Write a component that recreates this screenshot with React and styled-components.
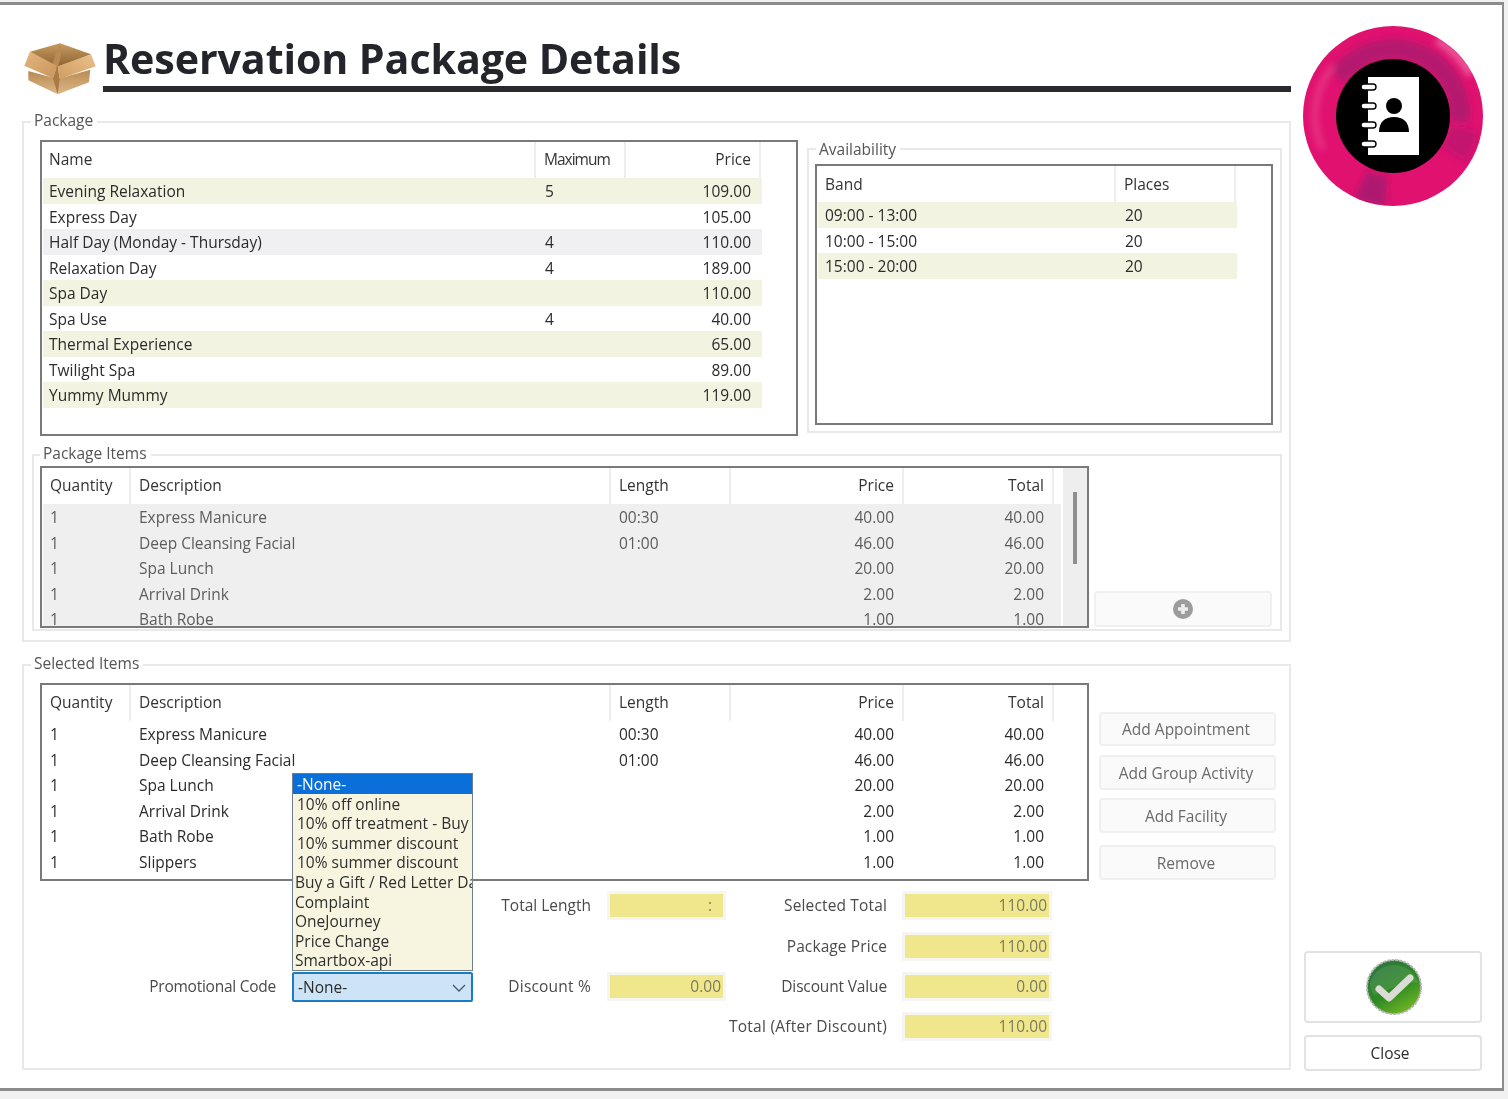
import React from "react";
import styled, { createGlobalStyle } from "styled-components";

const GlobalStyle = createGlobalStyle`
    html, body {
        margin: 0;
        padding: 0;
        background: #f1f1f1;
    }
    body {
        font-family: "Open Sans", "Noto Sans", "Liberation Sans", sans-serif;
        font-size: 15.5px;
        color: #2b2b2b;
    }
`;

const Page = styled.div`
    position: relative;
    width: 1508px;
    height: 1099px;
    overflow: hidden;
    background: #f1f1f1;
    filter: blur(0.35px);
`;

const Window = styled.div`
    position: absolute;
    left: -2px;
    top: 2px;
    width: 1506px;
    height: 1089px;
    box-sizing: border-box;
    background: #fff;
    border: 2px solid #8c8c8c;
    border-top-width: 3px;
    border-bottom-width: 3px;
`;

const Title = styled.h1`
    position: absolute;
    left: 103px;
    top: 30px;
    margin: 0;
    font-size: 41.2px;
    line-height: 56px;
    font-weight: 700;
    letter-spacing: -0.1px;
    color: #23252b;
    white-space: nowrap;
`;

const TitleRule = styled.div`
    position: absolute;
    left: 103px;
    top: 86px;
    width: 1188px;
    height: 6px;
    background: #2a2a2e;
`;

const BoxIcon = styled.svg`
    position: absolute;
    left: 15px;
    top: 35px;
`;

const Logo = styled.svg`
    position: absolute;
    left: 1302px;
    top: 25px;
`;

const Group = styled.div`
    position: absolute;
    left: ${(p) => p.$x}px;
    top: ${(p) => p.$y}px;
    width: ${(p) => p.$w}px;
    height: ${(p) => p.$h}px;
    box-sizing: border-box;
    border: 2px solid #e9e9e9;
`;

const GroupTitle = styled.span`
    position: absolute;
    left: ${(p) => p.$x}px;
    top: ${(p) => p.$y}px;
    padding: 0 4px 0 3px;
    background: #fff;
    color: #555;
    line-height: 22px;
    white-space: nowrap;
`;

const Frame = styled.div`
    position: absolute;
    left: ${(p) => p.$x}px;
    top: ${(p) => p.$y}px;
    width: ${(p) => p.$w}px;
    height: ${(p) => p.$h}px;
    box-sizing: border-box;
    border: 2px solid #7a7a7a;
    background: #fff;
    overflow: hidden;
`;

const Head = styled.div`
    display: grid;
    grid-template-columns: ${(p) => p.$cols};
    height: ${(p) => p.$h}px;
`;

const HeadCell = styled.div`
    padding: 0 ${(p) => (p.$right ? "8px" : "0")} 0 ${(p) => p.$pad ?? 8}px;
    border-right: 2px solid #eeeeee;
    line-height: ${(p) => p.$lh}px;
    letter-spacing: ${(p) => p.$ls ?? 0}px;
    text-align: ${(p) => (p.$right ? "right" : "left")};
    color: #333;
    white-space: nowrap;
`;

const Row = styled.div`
    display: grid;
    grid-template-columns: ${(p) => p.$cols};
    height: 25.55px;
    line-height: 27.55px;
    margin-left: 1px;
    width: ${(p) => p.$w}px;
    background: ${(p) => p.$bg || "transparent"};
    color: ${(p) => (p.$muted ? "#5c5c5c" : "#2b2b2b")};
`;

const Cell = styled.div`
    padding: 0 ${(p) => (p.$right ? "11px" : "0")} 0 ${(p) => p.$pad ?? 7}px;
    text-align: ${(p) => (p.$right ? "right" : "left")};
    white-space: nowrap;
    overflow: hidden;
`;

const ScrollTrack = styled.div`
    position: absolute;
    right: 0;
    top: 0;
    bottom: 0;
    width: 24px;
    background: #efeeef;
`;

const ScrollThumb = styled.div`
    position: absolute;
    left: 10px;
    top: 24px;
    width: 4px;
    height: 72px;
    background: #8f8f8f;
`;

const Button = styled.button`
    position: absolute;
    left: ${(p) => p.$x}px;
    top: ${(p) => p.$y}px;
    width: ${(p) => p.$w}px;
    height: ${(p) => p.$h}px;
    box-sizing: border-box;
    padding: 0 ${(p) => p.$pr ?? 0}px 0 ${(p) => p.$pl ?? 0}px;
    display: flex;
    align-items: center;
    justify-content: center;
    border: 2px solid ${(p) => (p.$dark ? "#e2e2e2" : "#f0f0f0")};
    border-radius: 4px;
    background: ${(p) => (p.$dark ? "#fff" : "#fbfafb")};
    font: inherit;
    color: ${(p) => (p.$dark ? "#2b2b2b" : "#6a6a6a")};
`;

const FieldLabel = styled.label`
    position: absolute;
    right: ${(p) => 1508 - p.$right}px;
    top: ${(p) => p.$y}px;
    line-height: 26px;
    letter-spacing: ${(p) => p.$ls ?? 0}px;
    color: #4a4a4a;
    white-space: nowrap;
`;

const Field = styled.div`
    position: absolute;
    left: ${(p) => p.$x}px;
    top: ${(p) => p.$y}px;
    width: ${(p) => p.$w}px;
    height: 29px;
    box-sizing: border-box;
    border: 3px solid #f5f5f2;
    background: #f0e68c;
    color: #7b7b60;
    line-height: 23px;
    text-align: right;
    padding-right: ${(p) => p.$pr ?? 2}px;
`;

const Options = styled.ul`
    position: absolute;
    left: 292px;
    top: 773px;
    width: 181px;
    height: 198px;
    box-sizing: border-box;
    margin: 0;
    padding: 0;
    list-style: none;
    border: 1px solid #6e7f8f;
    border-top-color: #4a7fb5;
    background: #f7f5df;
    overflow: hidden;
`;

const Option = styled.li`
    height: 19.6px;
    line-height: 21.6px;
    padding-left: ${(p) => (p.$indent ? 4 : 2)}px;
    background: ${(p) => (p.$active ? "#0a6fd8" : "transparent")};
    color: ${(p) => (p.$active ? "#fff" : "#2f2f2f")};
    white-space: nowrap;
`;

const Select = styled.div`
    position: absolute;
    left: 292px;
    top: 972px;
    width: 181px;
    height: 30px;
    box-sizing: border-box;
    padding-left: 4px;
    border: 2px solid #1f7ac4;
    border-radius: 2px;
    background: #cde4f7;
    line-height: 26px;
    color: #2b2b2b;
`;

const Chevron = styled.svg`
    position: absolute;
    right: 4px;
    top: 9px;
`;

const packageCols = "494px 90px 135px";
const packageRows = [
    ["Evening Relaxation", "5", "109.00", "#f3f3e1"],
    ["Express Day", "", "105.00"],
    ["Half Day (Monday - Thursday)", "4", "110.00", "#f0f0f2"],
    ["Relaxation Day", "4", "189.00"],
    ["Spa Day", "", "110.00", "#f3f3e1"],
    ["Spa Use", "4", "40.00"],
    ["Thermal Experience", "", "65.00", "#f3f3e1"],
    ["Twilight Spa", "", "89.00"],
    ["Yummy Mummy", "", "119.00", "#f3f3e1"],
];

const bandCols = "299px 120px";
const bandRows = [
    ["09:00 - 13:00", "20", "#f3f3e1"],
    ["10:00 - 15:00", "20"],
    ["15:00 - 20:00", "20", "#f3f3e1"],
];

const itemCols = "89px 480px 120px 173px 150px";
const itemHead = [
    { t: "Quantity" },
    { t: "Description" },
    { t: "Length" },
    { t: "Price", right: true },
    { t: "Total", right: true },
];
const itemRows = [
    ["1", "Express Manicure", "00:30", "40.00", "40.00"],
    ["1", "Deep Cleansing Facial", "01:00", "46.00", "46.00"],
    ["1", "Spa Lunch", "", "20.00", "20.00"],
    ["1", "Arrival Drink", "", "2.00", "2.00"],
    ["1", "Bath Robe", "", "1.00", "1.00"],
    ["1", "Slippers", "", "1.00", "1.00"],
];

const promoCodes = [
    { t: "-None-", active: true, indent: true },
    { t: "10% off online", indent: true },
    { t: "10% off treatment - Buy One Get One", indent: true },
    { t: "10% summer discount", indent: true },
    { t: "10% summer discount", indent: true },
    { t: "Buy a Gift / Red Letter Day" },
    { t: "Complaint" },
    { t: "OneJourney" },
    { t: "Price Change" },
    { t: "Smartbox-api" },
];

const labels = [
    { t: "Total Length", right: 591, y: 892 },
    { t: "Selected Total", right: 887, y: 892, ls: 0.15 },
    { t: "Package Price", right: 887, y: 933, ls: 0.1 },
    { t: "Promotional Code", right: 276, y: 973, ls: -0.25 },
    { t: "Discount %", right: 591, y: 973, ls: 0.2 },
    { t: "Discount Value", right: 887, y: 973, ls: -0.15 },
    { t: "Total (After Discount)", right: 887, y: 1013, ls: 0.25 },
];

const fields = [
    { v: ":", x: 607, y: 891, w: 119, pr: 11 },
    { v: "0.00", x: 607, y: 972, w: 119 },
    { v: "110.00", x: 902, y: 891, w: 150 },
    { v: "110.00", x: 902, y: 932, w: 150 },
    { v: "0.00", x: 902, y: 972, w: 150 },
    { v: "110.00", x: 902, y: 1012, w: 150 },
];

const sideButtons = [
    { t: "Add Appointment", y: 712, h: 34 },
    { t: "Add Group Activity", y: 755, h: 35 },
    { t: "Add Facility", y: 798, h: 35 },
    { t: "Remove", y: 845, h: 35 },
];

// ring segment of the logo, angles clockwise from 12 o'clock
const arc = (r, from, to) => {
    const pt = (a) => {
        const rad = ((a - 90) * Math.PI) / 180;
        return `${(91 + r * Math.cos(rad)).toFixed(2)} ${(91 + r * Math.sin(rad)).toFixed(2)}`;
    };
    return `M${pt(from)} A${r} ${r} 0 ${to - from > 180 ? 1 : 0} 1 ${pt(to)}`;
};

const ItemTable = ({ rows, muted, bg }) => (
    <>
        <Head $cols={itemCols} $h={36}>
            {itemHead.map((h) => (
                <HeadCell key={h.t} $right={h.right} $lh={34}>{h.t}</HeadCell>
            ))}
        </Head>
        {rows.map((r, i) => (
            <Row key={i} $cols={itemCols} $w={1018} $bg={bg} $muted={muted}>
                <Cell $pad={7}>{r[0]}</Cell>
                <Cell $pad={7}>{r[1]}</Cell>
                <Cell $pad={7}>{r[2]}</Cell>
                <Cell $right>{r[3]}</Cell>
                <Cell $right>{r[4]}</Cell>
            </Row>
        ))}
    </>
);

const App = () => (
    <Page>
        <GlobalStyle />
        <Window />

        <BoxIcon width="90" height="65" viewBox="0 0 270 195">
            <defs>
                <linearGradient id="boxInner" x1="0" y1="0" x2="0" y2="1">
                    <stop offset="0" stopColor="#c79a60" />
                    <stop offset="1" stopColor="#8a5f30" />
                </linearGradient>
                <linearGradient id="boxLeft" x1="0" y1="0" x2="1" y2="1">
                    <stop offset="0" stopColor="#e2b67f" />
                    <stop offset="1" stopColor="#c9955a" />
                </linearGradient>
                <linearGradient id="boxRight" x1="1" y1="0" x2="0" y2="1">
                    <stop offset="0" stopColor="#e8c08c" />
                    <stop offset="1" stopColor="#d09d60" />
                </linearGradient>
                <linearGradient id="boxBody" x1="0" y1="0" x2="0" y2="1">
                    <stop offset="0" stopColor="#b98a52" />
                    <stop offset="1" stopColor="#ddb888" />
                </linearGradient>
                <filter id="boxSoft"><feGaussianBlur stdDeviation="1.4" /></filter>
            </defs>
            <g filter="url(#boxSoft)">
                <path d="M45 50 L135 25 L228 58 L128 100 Z" fill="url(#boxInner)" />
                <path d="M135 25 L138 62 L128 100 L112 88 L122 58 Z" fill="#b98a52" />
                <path d="M40 108 L128 132 L128 178 L40 136 Z" fill="url(#boxBody)" />
                <path d="M128 132 L226 104 L222 142 L128 178 Z" fill="url(#boxBody)" />
                <path d="M45 50 L28 92 L114 130 L126 92 Z" fill="url(#boxLeft)" />
                <path d="M228 58 L242 94 L134 132 L128 94 Z" fill="url(#boxRight)" />
                <path d="M126 92 L114 130 L128 178 L134 132 L128 94 Z" fill="#a87a44" />
            </g>
        </BoxIcon>
        <Title>Reservation Package Details</Title>
        <TitleRule />

        <Logo width="182" height="182" viewBox="0 0 182 182">
            <defs>
                <clipPath id="ringClip"><circle cx="91" cy="91" r="90" /></clipPath>
                <filter id="ringSoft"><feGaussianBlur stdDeviation="3" /></filter>
            </defs>
            <circle cx="91" cy="91" r="90" fill="#e0116f" />
            <g clipPath="url(#ringClip)" filter="url(#ringSoft)" fill="none">
                <path d={arc(67, -55, 95)} stroke="#98206e" strokeWidth="20" opacity="0.6" />
                <path d={arc(88, 30, 62)} stroke="#f06aa6" strokeWidth="8" opacity="0.8" />
                <path d={arc(78, 245, 310)} stroke="#ef4c94" strokeWidth="7" opacity="0.55" />
                <path d={arc(76, 185, 205)} stroke="#8e1f72" strokeWidth="30" opacity="0.6" />
                <path d={arc(72, 100, 122)} stroke="#a01c6e" strokeWidth="28" opacity="0.45" />
            </g>
            <circle cx="91" cy="91" r="57" fill="#000" />
            <rect x="66" y="52" width="51" height="78" fill="#fff" />
            <g fill="#fff" stroke="#000" strokeWidth="1.4">
                <rect x="59" y="59" width="15" height="6" rx="3" />
                <rect x="59" y="78" width="15" height="6" rx="3" />
                <rect x="59" y="97" width="15" height="6" rx="3" />
                <rect x="59" y="116" width="15" height="6" rx="3" />
            </g>
            <circle cx="92" cy="81" r="8" fill="#000" />
            <path d="M77 107 C77 97 83 92 92 92 C101 92 107 97 107 107 Z" fill="#000" />
        </Logo>

        <Group $x={22} $y={121} $w={1269} $h={521} />
        <GroupTitle $x={31} $y={109}>Package</GroupTitle>

        <Frame $x={40} $y={140} $w={758} $h={296}>
            <Head $cols={packageCols} $h={36}>
                <HeadCell $pad={7} $lh={35}>Name</HeadCell>
                <HeadCell $ls={-1} $lh={35}>Maximum</HeadCell>
                <HeadCell $right $lh={35}>Price</HeadCell>
            </Head>
            {packageRows.map((r) => (
                <Row key={r[0]} $cols={packageCols} $w={719} $bg={r[3]}>
                    <Cell $pad={6}>{r[0]}</Cell>
                    <Cell $pad={8}>{r[1]}</Cell>
                    <Cell $right>{r[2]}</Cell>
                </Row>
            ))}
        </Frame>

        <Group $x={807} $y={148} $w={475} $h={285} />
        <GroupTitle $x={816} $y={138}>Availability</GroupTitle>
        <Frame $x={815} $y={164} $w={458} $h={261}>
            <Head $cols={bandCols} $h={36}>
                <HeadCell $lh={36}>Band</HeadCell>
                <HeadCell $lh={36}>Places</HeadCell>
            </Head>
            {bandRows.map((r) => (
                <Row key={r[0]} $cols={bandCols} $w={419} $bg={r[2]}>
                    <Cell>{r[0]}</Cell>
                    <Cell $pad={8}>{r[1]}</Cell>
                </Row>
            ))}
        </Frame>

        <Group $x={32} $y={454} $w={1250} $h={177} />
        <GroupTitle $x={40} $y={442}>Package Items</GroupTitle>
        <Frame $x={40} $y={466} $w={1049} $h={162}>
            <ScrollTrack>
                <ScrollThumb />
            </ScrollTrack>
            <ItemTable rows={itemRows.slice(0, 5)} muted bg="#f0eff0" />
        </Frame>
        <Button $x={1094} $y={591} $w={178} $h={36}>
            <svg width="22" height="22" viewBox="0 0 22 22">
                <circle cx="11" cy="11" r="10" fill="#9c9c9c" />
                <path d="M11 6 V16 M6 11 H16" stroke="#ececec" strokeWidth="3.6" />
            </svg>
        </Button>

        <Group $x={22} $y={664} $w={1269} $h={406} />
        <GroupTitle $x={31} $y={652}>Selected Items</GroupTitle>
        <Frame $x={40} $y={683} $w={1049} $h={198}>
            <ItemTable rows={itemRows} />
        </Frame>

        {sideButtons.map((b) => (
            <Button key={b.t} $x={1099} $y={b.y} $w={177} $h={b.h} $pr={3}>{b.t}</Button>
        ))}

        {labels.map((l) => (
            <FieldLabel key={l.t} $right={l.right} $y={l.y} $ls={l.ls}>{l.t}</FieldLabel>
        ))}
        {fields.map((f, i) => (
            <Field key={i} $x={f.x} $y={f.y} $w={f.w} $pr={f.pr}>{f.v}</Field>
        ))}

        <Options>
            {promoCodes.map((c, i) => (
                <Option key={i} $active={c.active} $indent={c.indent}>{c.t}</Option>
            ))}
        </Options>
        <Select>
            -None-
            <Chevron width="16" height="10" viewBox="0 0 16 10">
                <path d="M2 2 L8 8 L14 2" fill="none" stroke="#44586b" strokeWidth="1.3" />
            </Chevron>
        </Select>

        <Button $dark $x={1304} $y={951} $w={178} $h={72} $pl={2}>
            <svg width="58" height="58" viewBox="0 0 58 58">
                <defs>
                    <linearGradient id="okFill" x1="0.2" y1="0" x2="0.8" y2="1">
                        <stop offset="0" stopColor="#2b7440" />
                        <stop offset="0.55" stopColor="#2f8a24" />
                        <stop offset="1" stopColor="#78bc22" />
                    </linearGradient>
                </defs>
                <circle cx="29" cy="29" r="27" fill="url(#okFill)" stroke="#b5b5b5" strokeWidth="2" strokeDasharray="3 1" />
                <path d="M5 25 A25 25 0 0 1 53 25 C40 22 24 32 9 37 C6 33 5 29 5 25 Z" fill="#fff" opacity="0.1" />
                <path d="M14 31 L24 40 L45 20" fill="none" stroke="#dcdcd6" strokeWidth="7" strokeLinecap="round" strokeLinejoin="round" />
            </svg>
        </Button>
        <Button $dark $x={1304} $y={1035} $w={178} $h={36} $pr={6}>Close</Button>
    </Page>
);

export default App;
